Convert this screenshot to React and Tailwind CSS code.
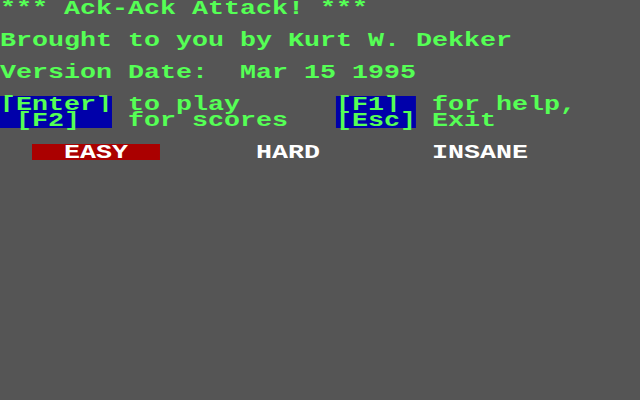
const Box = ({ bg = 'bg-[#0000aa]', children }) => (
  <span className={`inline-block h-4 align-top ${bg}`}>{children}</span>
);

export default function App() {
  return (
    <div className="w-[640px] h-[400px] overflow-hidden bg-[#555555]">
      <div
        className="origin-top-left scale-x-[1.3331] whitespace-pre text-[20px] leading-[18px] font-bold text-[#55ff55]"
        style={{ fontFamily: '"Liberation Mono", "DejaVu Sans Mono", monospace' }}
      >
        <div className="h-4">*** Ack-Ack Attack! ***</div>
        <div className="h-4"></div>
        <div className="h-4">Brought to you by Kurt W. Dekker</div>
        <div className="h-4"></div>
        <div className="h-4">Version Date:  Mar 15 1995</div>
        <div className="h-4"></div>
        <div className="h-4">
          <Box>[Enter]</Box> to play      <Box>[F1] </Box> for help,
        </div>
        <div className="h-4">
          <Box> [F2]  </Box> for scores   <Box>[Esc]</Box> Exit
        </div>
        <div className="h-4"></div>
        <div className="h-4 text-white">
          {'  '}<Box bg="bg-[#aa0000]">  EASY  </Box>      HARD       INSANE
        </div>
      </div>
    </div>
  );
}
